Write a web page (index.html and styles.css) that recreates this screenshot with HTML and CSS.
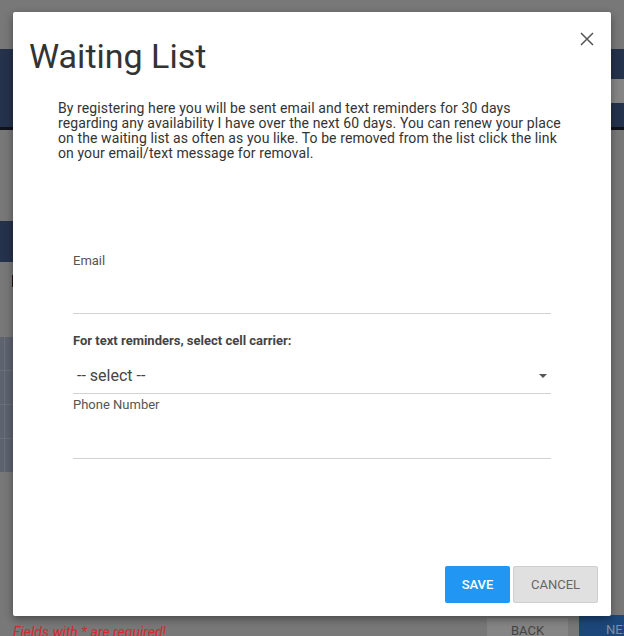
FILE: index.html
```html
<!DOCTYPE html>
<html lang="en">
<head>
	<meta charset="UTF-8">
	<title>Waiting List</title>
	<link rel="stylesheet" href="styles.css">
</head>
<body>
	<div class="page">
		<div class="page-header">
			<div class="header-tab"></div>
		</div>
		<div class="side-band"></div>
		<div class="side-mark"></div>
		<div class="side-grid">
			<div class="cell"></div><div class="cell"></div>
			<div class="cell"></div><div class="cell"></div>
			<div class="cell"></div><div class="cell"></div>
			<div class="cell"></div><div class="cell"></div>
		</div>
		<div class="page-footer">
			<p class="required-note">Fields with * are required!</p>
			<div class="footer-btns">
				<span class="btn-back">BACK</span>
				<span class="btn-next">NEXT</span>
			</div>
		</div>
	</div>

	<div class="modal">
		<div class="modal-header">
			<h1 class="modal-title">Waiting List</h1>
			<span class="modal-close">
				<svg width="14" height="14" viewBox="0 0 14 14"><path d="M1 1L13 13M13 1L1 13" stroke="#555" stroke-width="1.5" fill="none"/></svg>
			</span>
		</div>
		<div class="modal-body">
			<p class="intro">By registering here you will be sent email and text reminders for 30 days regarding any availability I have over the next 60 days. You can renew your place on the waiting list as often as you like. To be removed from the list click the link on your email/text message for removal.</p>
			<div class="form">
				<label class="field-label">Email</label>
				<div class="field-input email-input"></div>
				<label class="field-label bold">For text reminders, select cell carrier:</label>
				<div class="field-select">
					<span>-- select --</span>
					<span class="caret"></span>
				</div>
				<label class="field-label phone-label">Phone Number</label>
				<div class="field-input phone-input"></div>
			</div>
		</div>
		<div class="modal-footer">
			<span class="btn btn-save">SAVE</span>
			<span class="btn btn-cancel">CANCEL</span>
		</div>
	</div>
</body>
</html>
```

FILE: styles.css
```css
* {
	padding: 0;
	margin: 0;
	box-sizing: border-box;
}
html, body {
	width: 624px;
	height: 636px;
	overflow: hidden;
}
body {
	position: relative;
	background: #787878;
	font-family: Roboto, "Liberation Sans", sans-serif;
}
.page {
	display: flex;
	flex-direction: column;
	height: 100%;
}
.page-header {
	margin-top: 49px;
	height: 81px;
	background: #25324b;
	border-bottom: 3px solid #10131a;
	display: flex;
	justify-content: flex-end;
	padding-top: 30px;
}
.header-tab {
	width: 13px;
	height: 24px;
	background: #858585;
}
.side-band {
	margin-top: 91px;
	width: 120px;
	height: 41px;
	background: #25324b;
}
.side-mark {
	margin: 13px 0 0 12px;
	width: 2px;
	height: 12px;
	background: #2a1010;
}
.side-grid {
	margin-top: 50px;
	width: 140px;
	display: grid;
	grid-template-columns: 4px 1fr;
	grid-auto-rows: 33px;
	gap: 1px;
	background: #6b6f78;
}
.side-grid .cell {
	background: #5e6370;
}
.page-footer {
	margin-top: auto;
	display: flex;
	justify-content: space-between;
	align-items: flex-end;
	height: 22px;
}
.required-note {
	padding-left: 13px;
	font-size: 14px;
	font-style: italic;
	color: #d42a30;
	line-height: 14px;
	margin-bottom: -3px;
}
.footer-btns {
	display: flex;
	align-items: flex-end;
	gap: 11px;
	height: 100%;
}
.btn-back {
	width: 81px;
	height: 18px;
	background: #858585;
	color: #444;
	font-size: 13px;
	text-align: center;
	padding-top: 5px;
}
.btn-next {
	width: 45px;
	height: 21px;
	background: #1c477a;
	color: #7d8ea6;
	font-size: 13px;
	padding: 7px 0 0 27px;
	white-space: nowrap;
	overflow: hidden;
}

/* modal */
.modal {
	position: absolute;
	left: 13px;
	top: 12px;
	width: 598px;
	height: 604px;
	background: #fff;
	border-radius: 2px;
	box-shadow: 0 3px 8px rgba(0, 0, 0, 0.4);
	display: flex;
	flex-direction: column;
}
.modal-header {
	display: flex;
	justify-content: space-between;
	align-items: flex-start;
	padding: 24px 17px 0 16px;
}
.modal-title {
	font-size: 34px;
	line-height: 40px;
	font-weight: 400;
	color: #333;
}
.modal-close {
	margin-top: -4px;
	display: block;
	width: 14px;
	height: 14px;
}
.modal-close svg {
	display: block;
}
.modal-body {
	flex: 1;
	padding-left: 45px;
}
.intro {
	margin-top: 25px;
	width: 510px;
	font-size: 14px;
	letter-spacing: 0.1px;
	line-height: 15px;
	color: #333;
}
.form {
	margin: 92px 0 0 15px;
	width: 478px;
	display: flex;
	flex-direction: column;
}
.field-label {
	font-size: 13px;
	line-height: 15px;
	color: #555;
}
.field-label.bold {
	font-weight: 700;
	color: #444;
	margin-top: 19px;
}
.field-input {
	border-bottom: 1px solid #d0d3d0;
}
.email-input {
	height: 46px;
}
.phone-input {
	height: 47px;
}
.field-select {
	display: flex;
	justify-content: space-between;
	align-items: center;
	height: 46px;
	padding: 19px 4px 8px 4px;
	border-bottom: 1px solid #d0d3d0;
	font-size: 16px;
	line-height: 18px;
	color: #444;
}
.caret {
	width: 0;
	height: 0;
	border-left: 4px solid transparent;
	border-right: 4px solid transparent;
	border-top: 4px solid #555;
}
.phone-label {
	margin-top: 3px;
}
.modal-footer {
	display: flex;
	justify-content: flex-end;
	gap: 3px;
	padding: 0 13px 13px 0;
}
.btn {
	height: 37px;
	font-size: 13px;
	line-height: 37px;
	text-align: center;
	border-radius: 2px;
}
.btn-save {
	width: 65px;
	background: #2196f3;
	color: #fff;
	font-weight: 500;
}
.btn-cancel {
	width: 85px;
	background: #e0e0e0;
	border: 1px solid #cfcfcf;
	line-height: 35px;
	color: #666;
}
```
